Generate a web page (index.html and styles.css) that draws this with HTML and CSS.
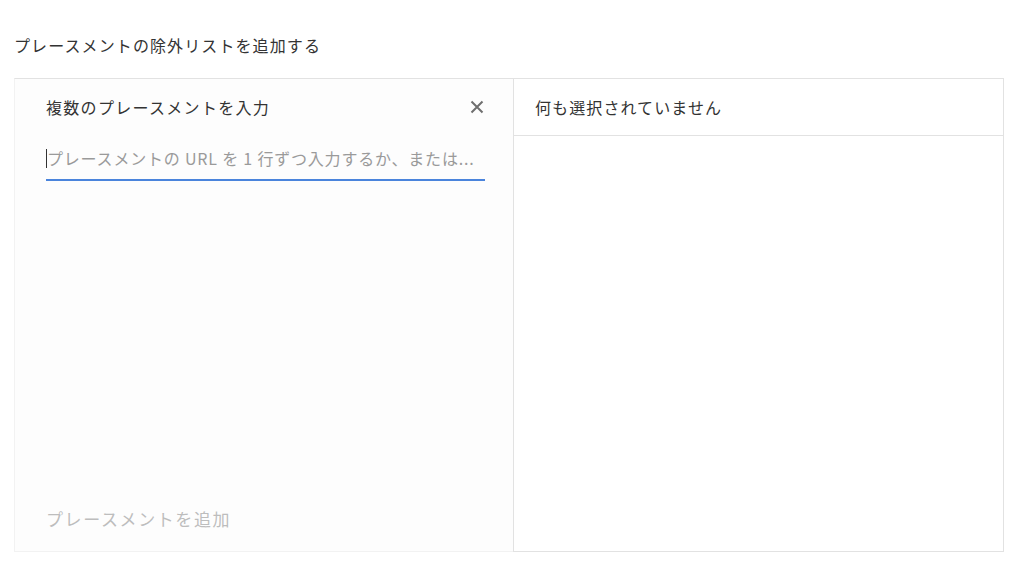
FILE: index.html
```html
<!DOCTYPE html>
<html lang="ja">
<head>
    <meta charset="UTF-8">
    <meta name="viewport" content="width=device-width, initial-scale=1.0">
    <title>プレースメントの除外リストを追加する</title>
    <link rel="stylesheet" href="styles.css">
</head>
<body>

<h1 class="page-title">プレースメントの除外リストを追加する</h1>

<div class="editor">
    <div class="input-panel">
        <div class="input-head">
            <span class="input-label">複数のプレースメントを入力</span>
            <button class="close-btn" aria-label="閉じる">
                <svg width="14" height="14" viewBox="0 0 14 14">
                    <path d="M1.5 1.5 L12.5 12.5 M12.5 1.5 L1.5 12.5" stroke="#6f6f6f" stroke-width="2" fill="none"/>
                </svg>
            </button>
        </div>
        <div class="field">
            <span class="caret"></span>
            <span class="placeholder">プレースメントの URL を 1 行ずつ入力するか、または...</span>
        </div>
        <div class="add-link">プレースメントを追加</div>
    </div>

    <div class="selected-panel">
        <div class="selected-head">何も選択されていません</div>
    </div>
</div>

</body>
</html>
```

FILE: styles.css
```css
body {
    margin: 0;
    font-family: "Noto Sans CJK JP", "Noto Sans", sans-serif;
    background-color: #fff;
    color: #333;
}
.page-title {
    font-size: 16px;
    font-weight: normal;
    letter-spacing: 1.1px;
    margin: 0;
    padding: 34px 0 0 14px;
    line-height: 22px;
}
.editor {
    display: flex;
    margin: 22px 20px 0 14px;
    height: 474px;
}
.input-panel {
    width: 499px;
    background-color: #fdfdfd;
    border-top: 1px solid #e2e2e2;
    border-left: 1px solid #f2f2f2;
    border-bottom: 1px solid #f2f2f2;
    padding: 0 28px 0 31px;
    box-sizing: border-box;
    display: flex;
    flex-direction: column;
}
.input-head {
    display: flex;
    justify-content: space-between;
    align-items: center;
    height: 56px;
}
.input-label {
    font-size: 16px;
    letter-spacing: 1.3px;
}
.close-btn {
    border: none;
    background: none;
    padding: 0;
    width: 16px;
    height: 16px;
    display: flex;
    align-items: center;
    justify-content: center;
    cursor: pointer;
}
.field {
    display: flex;
    align-items: flex-start;
    height: 32px;
    padding-top: 12px;
    line-height: 22px;
    border-bottom: 2px solid #4a84dc;
}
.caret {
    width: 1px;
    height: 19px;
    margin-top: 2px;
    background-color: #333;
}
.placeholder {
    color: #9a9a9a;
    font-size: 16px;
    letter-spacing: 0.8px;
    white-space: nowrap;
}
.add-link {
    margin-top: auto;
    margin-bottom: 20px;
    color: #bdbdbd;
    font-size: 17px;
    letter-spacing: 1.6px;
}
.selected-panel {
    flex: 1;
    border: 1px solid #e2e2e2;
    background-color: #fff;
}
.selected-head {
    height: 56px;
    border-bottom: 1px solid #e2e2e2;
    display: flex;
    align-items: center;
    padding-left: 21px;
    font-size: 16px;
    letter-spacing: 1.1px;
}
```
